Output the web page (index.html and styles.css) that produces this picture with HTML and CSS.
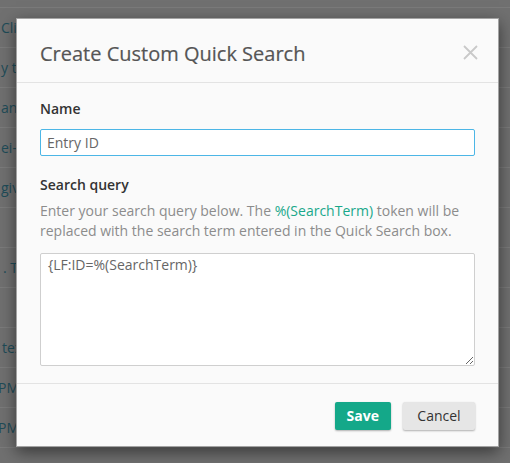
FILE: index.html
```html
<!DOCTYPE html>
<html>
<head>
<meta charset="utf-8">
<link rel="stylesheet" href="styles.css">
</head>
<body>
<div class="page">
  <div class="top-row"></div>
  <div class="row"><span class="cell">Click here</span></div>
  <div class="row"><span class="cell">y to open</span></div>
  <div class="row"><span class="cell">an item</span></div>
  <div class="row"><span class="cell">ei-name</span></div>
  <div class="row"><span class="cell">give it</span></div>
  <div class="row"><span class="cell"></span></div>
  <div class="row"><span class="cell dot">. Test</span></div>
  <div class="row"><span class="cell"></span></div>
  <div class="row"><span class="cell shift">text</span></div>
  <div class="row"><span class="cell pm">PM</span></div>
  <div class="row"><span class="cell pm">PM</span></div>
</div>

<div class="modal">
  <div class="modal-header">
    <h4 class="modal-title">Create Custom Quick Search</h4>
    <button class="close" aria-label="Close">
      <svg width="15" height="15" viewBox="0 0 15 15"><path d="M1 1 L14 14 M14 1 L1 14" stroke="#c9c9c9" stroke-width="1.8" fill="none"/></svg>
    </button>
  </div>
  <div class="modal-body">
    <label class="label name-label">Name</label>
    <input class="input" type="text" value="Entry ID">
    <label class="label query-label">Search query</label>
    <p class="help">Enter your search query below. The <span class="token">%(SearchTerm)</span> token will be replaced with the search term entered in the Quick Search box.</p>
    <textarea class="query">{LF:ID=%(SearchTerm)}</textarea>
  </div>
  <div class="modal-footer">
    <button class="btn btn-save">Save</button>
    <button class="btn btn-cancel">Cancel</button>
  </div>
</div>
</body>
</html>
```

FILE: styles.css
```css
html, body {
  margin: 0;
  padding: 0;
}
body {
  width: 510px;
  height: 463px;
  overflow: hidden;
  background: #707070;
  font-family: "Open Sans", "Liberation Sans", sans-serif;
  font-size: 14px;
  position: relative;
}
.page {
  display: flex;
  flex-direction: column;
}
.top-row {
  box-sizing: border-box;
  height: 8px;
  border-bottom: 1px solid #7b7b7b;
}
.row {
  height: 40px;
  box-sizing: border-box;
  border-bottom: 1px solid #7b7b7b;
  display: flex;
  align-items: center;
  color: #1f4c58;
  line-height: 20px;
  white-space: nowrap;
}
.cell {
  padding-left: 1px;
}
.cell.dot {
  padding-left: 3px;
}
.cell.shift {
  padding-left: 2px;
}
.cell.pm {
  margin-left: -3px;
}

.modal {
  position: absolute;
  left: 16px;
  top: 18px;
  width: 483px;
  box-sizing: border-box;
  background: #fafafa;
  border: 1px solid rgba(0, 0, 0, 0.35);
  box-shadow: 0 5px 15px rgba(0, 0, 0, 0.5);
}
.modal-header {
  display: flex;
  align-items: flex-start;
  padding: 21px 20px 14px 23px;
  border-bottom: 1px solid #e3e3e3;
}
.modal-title {
  flex: 1;
  margin: 0;
  font-size: 20px;
  font-weight: 400;
  line-height: 28px;
  color: #555;
  -webkit-text-stroke: 0.2px #555;
}
.close {
  margin-top: 5px;
  padding: 0;
  border: 0;
  background: none;
  width: 15px;
  height: 15px;
  display: block;
}
.close svg {
  display: block;
}
.modal-body {
  display: flex;
  flex-direction: column;
  padding: 16px 23px 17px 23px;
}
.label {
  display: block;
  font-weight: 600;
  color: #333;
  line-height: 20px;
}
.name-label {
  margin-bottom: 10px;
}
.input {
  box-sizing: border-box;
  height: 27px;
  margin: 0;
  padding: 0 6px;
  border: 1px solid #4cb6e6;
  border-radius: 2px;
  background: #fff;
  font-family: "Open Sans", "Liberation Sans", sans-serif;
  font-size: 14px;
  color: #666;
  outline: none;
}
.query-label {
  margin-top: 19px;
  margin-bottom: 6px;
}
.help {
  margin: 0 0 12px 0;
  line-height: 20px;
  color: #8c8c8c;
}
.token {
  color: #19a88a;
}
.query {
  box-sizing: border-box;
  height: 113px;
  margin: 0;
  padding: 3px 7px;
  border: 1px solid #cfcfcf;
  border-radius: 2px;
  background: #fff;
  font-family: "Open Sans", "Liberation Sans", sans-serif;
  font-size: 14px;
  line-height: 16.8px;
  color: #666;
  outline: none;
}
.modal-footer {
  display: flex;
  justify-content: flex-end;
  gap: 12px;
  padding: 18px 23px 16px 23px;
  border-top: 1px solid #e3e3e3;
}
.btn {
  height: 28px;
  padding: 0 12px;
  border: 0;
  border-radius: 2px;
  font-family: "Open Sans", "Liberation Sans", sans-serif;
  font-size: 14px;
  line-height: 28px;
  box-shadow: 0 1px 2px rgba(0, 0, 0, 0.3);
}
.btn-save {
  background: #14a889;
  color: #fff;
  font-weight: 700;
}
.btn-cancel {
  min-width: 72px;
  background: #e6e6e6;
  color: #333;
}
```
